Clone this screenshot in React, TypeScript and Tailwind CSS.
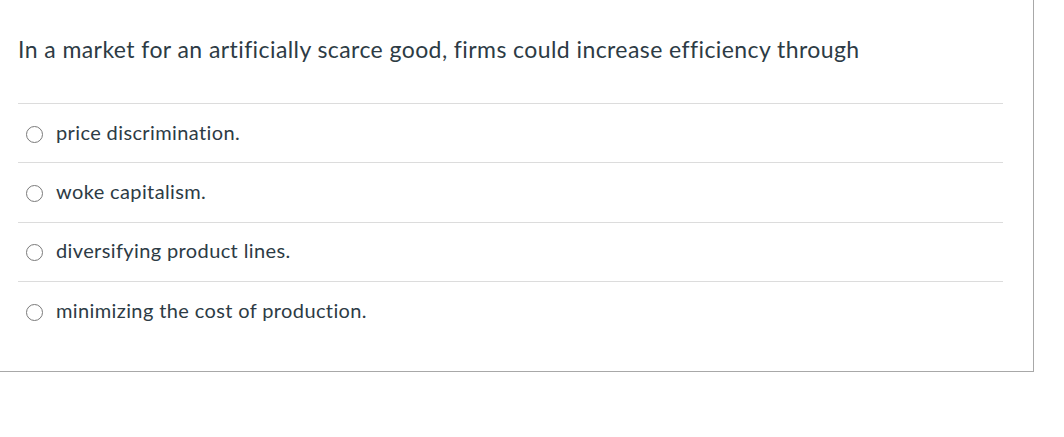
const answers = [
  'price discrimination.',
  'woke capitalism.',
  'diversifying product lines.',
  'minimizing the cost of production.',
];

export default function App() {
  return (
    <div className="w-[1064px] h-[437px] bg-white" style={{ fontFamily: 'Lato, "Open Sans", sans-serif' }}>
      <div className="w-[1034px] border-r border-b border-[#a8a8a8] pl-[18px] pr-[30px] pt-[34px] pb-[30px]">
        <p className="text-[23px] leading-[30px] tracking-[0.42px] text-[#2d3b45] mb-[39px]">
          In a market for an artificially scarce good, firms could increase efficiency through
        </p>
        <div className="border-t border-[#dcdcdc]">
          {answers.map((a) => (
            <label key={a} className="flex items-center h-[59.33px] border-b border-[#dcdcdc] last:border-b-0 pl-[8px] text-[20px] tracking-[0.38px] text-[#2d3b45]">
              <span className="w-[17px] h-[17px] rounded-full border-[1.5px] border-[#7a7a7a] mr-[13px] mt-[2px] shrink-0" />
              <span className="pb-[3px]">{a}</span>
            </label>
          ))}
        </div>
      </div>
    </div>
  );
}
